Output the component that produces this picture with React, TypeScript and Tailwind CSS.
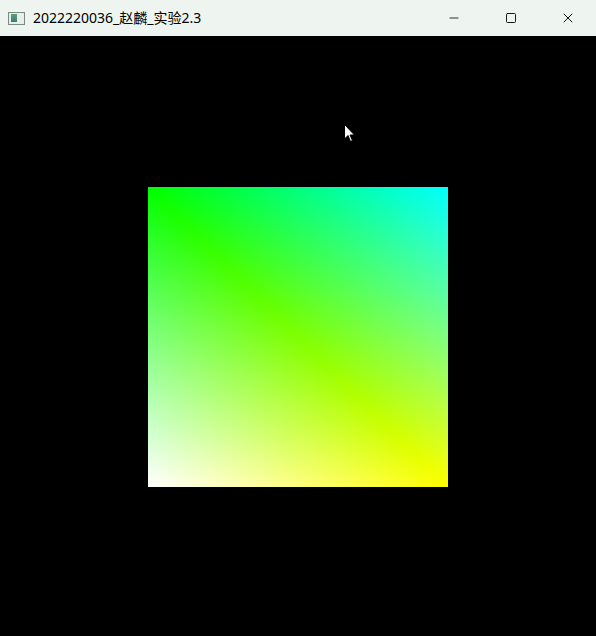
import { Minus, Square, X } from 'lucide-react';

// OpenGL-style quad: two triangles split along the TL-BR diagonal.
// Red rises top to bottom, green is full, blue = |u - v|.
export default function App() {
  return (
    <div className="w-[596px] h-[636px] flex flex-col bg-black overflow-hidden font-['Segoe_UI','Noto_Sans','Noto_Sans_CJK_SC',sans-serif]">
      <header className="h-9 shrink-0 flex items-center bg-[#eef5f1] text-black">
        <div className="flex items-center gap-[8px] pl-2 flex-1">
          <div className="w-[17px] h-[13px] border border-[#7c8a86] bg-[#e8eeea] flex items-center pl-[2px]">
            <div className="w-[6px] h-[8px] bg-[linear-gradient(to_bottom,#5aa06a,#3a7a8a)]" />
          </div>
          <span className="text-[14px] leading-none">2022220036_赵麟_实验2.3</span>
        </div>
        <div className="flex h-full">
          <button type="button" className="w-[57px] h-full flex items-center justify-center">
            <Minus className="h-[14px] w-[14px]" strokeWidth={1.4} />
          </button>
          <button type="button" className="w-[57px] h-full flex items-center justify-center">
            <Square className="h-[12px] w-[12px]" strokeWidth={1.8} absoluteStrokeWidth />
          </button>
          <button type="button" className="w-[57px] h-full flex items-center justify-center">
            <X className="h-[16px] w-[16px]" strokeWidth={1.4} />
          </button>
        </div>
      </header>

      <main className="relative flex-1 flex items-center justify-center pt-[2px]">
        <div className="w-[300px] h-[300px] bg-blend-screen bg-[image:linear-gradient(to_bottom_left,#0000ff_0%,#000000_50%,#0000ff_100%),linear-gradient(to_bottom,#00ff00,#ffff00)]" />

        {/* mouse pointer */}
        <svg className="absolute left-[344px] top-[88px]" width="12" height="19" viewBox="0 0 12 19">
          <path d="M0.5 0.5 L0.5 15 L4 11.5 L6.5 17.5 L8.5 16.5 L6 11 L10.5 11 Z" fill="#ffffff" stroke="#000000" strokeWidth="1" />
        </svg>
      </main>
    </div>
  );
}
